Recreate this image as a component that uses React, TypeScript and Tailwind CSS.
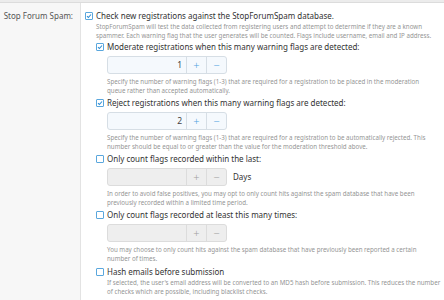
import React from "react";

const font = { fontFamily: '"Noto Sans", "Open Sans", sans-serif' };

function Check({ checked }: { checked: boolean }) {
  return (
    <span className="inline-flex h-[8px] w-[8px] shrink-0 items-center justify-center rounded-[1px] border border-[#5aa7dd] bg-white">
      {checked && (
        <svg width="6" height="6" viewBox="0 0 6 6">
          <path d="M1 3.1 L2.4 4.5 L5 1.5" fill="none" stroke="#2f8fd6" strokeWidth="1.1" />
        </svg>
      )}
    </span>
  );
}

function Row({ checked, children }: { checked: boolean; children: React.ReactNode }) {
  return (
    <div className="flex h-[12px] items-center gap-[3px] text-[8px] leading-[12px] text-[#333]">
      <Check checked={checked} />
      <span className="whitespace-nowrap">{children}</span>
    </div>
  );
}

function Desc({ children, className = "" }: { children: React.ReactNode; className?: string }) {
  return <div className={"whitespace-nowrap text-[6.2px] leading-[9px] text-[#959595] " + className}>{children}</div>;
}

function Spin({ value, enabled, suffix }: { value?: string; enabled: boolean; suffix?: string }) {
  const bg = enabled ? "bg-[#f5f9fd]" : "bg-[#eeeeee]";
  const border = enabled ? "border-[#d6dee5]" : "border-[#dcdcdc]";
  const sym = enabled ? "text-[#4fa3df]" : "text-[#a0a0a0]";
  return (
    <div className="mt-[3px] flex items-center">
      <div className={"flex h-[18px] w-[120px] rounded-[3px] border " + border + " " + bg}>
        <div className="flex flex-1 items-center justify-end pr-[4px] text-[8.5px] text-[#444]">{value}</div>
        <div className={"flex w-[20px] items-center justify-center border-l text-[11px] font-light " + border + " " + sym}>+</div>
        <div className={"flex w-[20px] items-center justify-center border-l text-[11px] font-light " + border + " " + sym}>−</div>
      </div>
      {suffix && <span className="ml-[6px] text-[8px] text-[#333]">{suffix}</span>}
    </div>
  );
}

export default function App() {
  return (
    <div className="h-[300px] w-[444px] overflow-hidden bg-white" style={font}>
      <div className="h-[3px] border-b border-[#dcdcdc] bg-[#ececec]" />
      <div className="flex h-[297px]">
        <div className="w-[81px] shrink-0 whitespace-nowrap border-r border-[#e3e3e3] bg-[#f7f7f7] pr-[7px] pt-[7px] text-right text-[8px] leading-[12px] text-[#555]">
          Stop Forum Spam:
        </div>
        <div className="min-w-0 flex-1 pl-[4px] pt-[7px]">
          <Row checked>Check new registrations against the StopForumSpam database.</Row>
          <Desc className="pl-[11px]">
            StopForumSpam will test the data collected from registering users and attempt to determine if they are a known
            <br />
            spammer. Each warning flag that the user generates will be counted. Flags include username, email and IP address.
          </Desc>
          <div className="pl-[11px]">
            <div className="mt-[1px]">
              <Row checked>Moderate registrations when this many warning flags are detected:</Row>
              <div className="pl-[11px]">
                <Spin value="1" enabled />
                <Desc className="mt-[3px]">
                  Specify the number of warning flags (1-3) that are required for a registration to be placed in the moderation
                  <br />
                  queue rather than accepted automatically.
                </Desc>
              </div>
            </div>
            <div className="mt-[2px]">
              <Row checked>Reject registrations when this many warning flags are detected:</Row>
              <div className="pl-[11px]">
                <Spin value="2" enabled />
                <Desc className="mt-[3px]">
                  Specify the number of warning flags (1-3) that are required for a registration to be automatically rejected. This
                  <br />
                  number should be equal to or greater than the value for the moderation threshold above.
                </Desc>
              </div>
            </div>
            <div className="mt-[2px]">
              <Row checked={false}>Only count flags recorded within the last:</Row>
              <div className="pl-[11px]">
                <Spin enabled={false} suffix="Days" />
                <Desc className="mt-[3px]">
                  In order to avoid false positives, you may opt to only count hits against the spam database that have been
                  <br />
                  previously recorded within a limited time period.
                </Desc>
              </div>
            </div>
            <div className="mt-[2px]">
              <Row checked={false}>Only count flags recorded at least this many times:</Row>
              <div className="pl-[11px]">
                <Spin enabled={false} />
                <Desc className="mt-[3px]">
                  You may choose to only count hits against the spam database that have previously been reported a certain
                  <br />
                  number of times.
                </Desc>
              </div>
            </div>
            <div className="mt-[3px]">
              <Row checked={false}>Hash emails before submission</Row>
              <Desc className="pl-[11px]">
                If selected, the user's email address will be converted to an MD5 hash before submission. This reduces the number
                <br />
                of checks which are possible, including blacklist checks.
              </Desc>
            </div>
          </div>
        </div>
      </div>
    </div>
  );
}
